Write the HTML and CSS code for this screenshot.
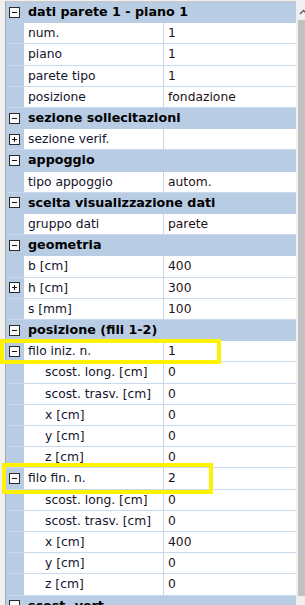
FILE: index.html
```html
<!DOCTYPE html>
<html>
<head>
<meta charset="utf-8">
<link rel="stylesheet" href="styles.css">
</head>
<body>
<div class="frame">
  <div class="grid">
    <div class="row head"><span class="gut"><span class="tog minus"></span></span><span class="ht">dati parete 1 - piano 1</span></div>
    <div class="row"><span class="gut"></span><span class="nm">num.</span><span class="vl">1</span></div>
    <div class="row"><span class="gut"></span><span class="nm">piano</span><span class="vl">1</span></div>
    <div class="row"><span class="gut"></span><span class="nm">parete tipo</span><span class="vl">1</span></div>
    <div class="row"><span class="gut"></span><span class="nm">posizione</span><span class="vl">fondazione</span></div>
    <div class="row head"><span class="gut"><span class="tog minus"></span></span><span class="ht">sezione sollecitazioni</span></div>
    <div class="row"><span class="gut"><span class="tog plus"></span></span><span class="nm">sezione verif.</span><span class="vl"></span></div>
    <div class="row head"><span class="gut"><span class="tog minus"></span></span><span class="ht">appoggio</span></div>
    <div class="row"><span class="gut"></span><span class="nm">tipo appoggio</span><span class="vl">autom.</span></div>
    <div class="row head"><span class="gut"><span class="tog minus"></span></span><span class="ht">scelta visualizzazione dati</span></div>
    <div class="row"><span class="gut"></span><span class="nm">gruppo dati</span><span class="vl">parete</span></div>
    <div class="row head"><span class="gut"><span class="tog minus"></span></span><span class="ht">geometria</span></div>
    <div class="row"><span class="gut"></span><span class="nm">b [cm]</span><span class="vl">400</span></div>
    <div class="row"><span class="gut"><span class="tog plus"></span></span><span class="nm">h [cm]</span><span class="vl">300</span></div>
    <div class="row"><span class="gut"></span><span class="nm">s [mm]</span><span class="vl">100</span></div>
    <div class="row head"><span class="gut"><span class="tog minus"></span></span><span class="ht">posizione (fili 1-2)</span></div>
    <div class="row"><span class="gut"><span class="tog minus"></span></span><span class="nm">filo iniz. n.</span><span class="vl">1</span></div>
    <div class="row"><span class="gut"></span><span class="nm sub">scost. long. [cm]</span><span class="vl">0</span></div>
    <div class="row"><span class="gut"></span><span class="nm sub">scost. trasv. [cm]</span><span class="vl">0</span></div>
    <div class="row"><span class="gut"></span><span class="nm sub">x [cm]</span><span class="vl">0</span></div>
    <div class="row"><span class="gut"></span><span class="nm sub">y [cm]</span><span class="vl">0</span></div>
    <div class="row"><span class="gut"></span><span class="nm sub">z [cm]</span><span class="vl">0</span></div>
    <div class="row"><span class="gut"><span class="tog minus"></span></span><span class="nm">filo fin. n.</span><span class="vl">2</span></div>
    <div class="row"><span class="gut"></span><span class="nm sub">scost. long. [cm]</span><span class="vl">0</span></div>
    <div class="row"><span class="gut"></span><span class="nm sub">scost. trasv. [cm]</span><span class="vl">0</span></div>
    <div class="row"><span class="gut"></span><span class="nm sub">x [cm]</span><span class="vl">400</span></div>
    <div class="row"><span class="gut"></span><span class="nm sub">y [cm]</span><span class="vl">0</span></div>
    <div class="row"><span class="gut"></span><span class="nm sub">z [cm]</span><span class="vl">0</span></div>
    <div class="row head"><span class="gut"><span class="tog minus"></span></span><span class="ht">scost. vert.</span></div>
  </div>
  <div class="scroll">
    <div class="arrow"><svg width="10" height="8" viewBox="0 0 10 8"><path d="M2 6 L5.5 2.5 L9 6" fill="none" stroke="#606060" stroke-width="1.4"/></svg></div>
    <div class="thumb"></div>
  </div>
  <div class="hl hl1"></div>
  <div class="hl hl2"></div>
</div>
</body>
</html>
```
FILE: styles.css
```css
html, body {
  margin: 0;
  padding: 0;
}
body {
  width: 305px;
  height: 605px;
  overflow: hidden;
  background: #f0f0f0;
  font-family: "DejaVu Sans", sans-serif;
  font-size: 12.3px;
  color: #14142c;
}
.frame {
  position: relative;
  display: flex;
  align-items: flex-start;
  padding: 1px 0 0 5px;
}
.grid {
  width: 290px;
  flex: none;
  border-left: 1px solid #a8a8a8;
  border-top: 1px solid #c8c8c8;
  background: #b8cce4;
}
.row {
  display: grid;
  grid-template-columns: 18px 139px 133px;
  height: 20.21px;
  border-bottom: 1px solid #c9d8ec;
  line-height: 20px;
  white-space: nowrap;
}
.row.head {
  grid-template-columns: 18px 272px;
  border-bottom-color: #b8cce4;
}
.gut {
  background: #b8cce4;
  display: flex;
  align-items: center;
  justify-content: flex-end;
  padding-right: 4px;
}
.tog {
  width: 9px;
  height: 9px;
  border: 1px solid #2a2a2a;
  background: #fbfbfb;
  position: relative;
  box-sizing: content-box;
}
.tog::before {
  content: "";
  position: absolute;
  left: 2px;
  top: 4px;
  width: 5px;
  height: 1px;
  background: #111;
}
.tog.plus::after {
  content: "";
  position: absolute;
  left: 4px;
  top: 2px;
  width: 1px;
  height: 5px;
  background: #111;
}
.ht {
  font-weight: bold;
  font-size: 12.7px;
  color: #000;
  padding-left: 4px;
  overflow: hidden;
}
.nm {
  background: #fff;
  padding-left: 4px;
  overflow: hidden;
}
.nm.sub {
  padding-left: 21px;
}
.vl {
  background: #fff;
  border-left: 1px solid #c4d4ea;
  padding-left: 4px;
  color: #1e1018;
  overflow: hidden;
}
.scroll {
  width: 10px;
  flex: none;
  height: 596px;
  display: flex;
  flex-direction: column;
  margin-top: -1px;
}
.arrow {
  height: 20px;
  padding-left: 2px;
  padding-top: 8px;
  box-sizing: border-box;
}
.arrow svg {
  display: block;
}
.thumb {
  flex: 1;
  margin-left: 2px;
  background: #c1c1c1;
}
.hl {
  position: absolute;
  border: 4px solid #fff200;
  box-sizing: border-box;
}
.hl1 {
  left: 0;
  top: 339px;
  width: 221px;
  height: 25px;
}
.hl2 {
  left: 2px;
  top: 463px;
  width: 211px;
  height: 31px;
}
```
